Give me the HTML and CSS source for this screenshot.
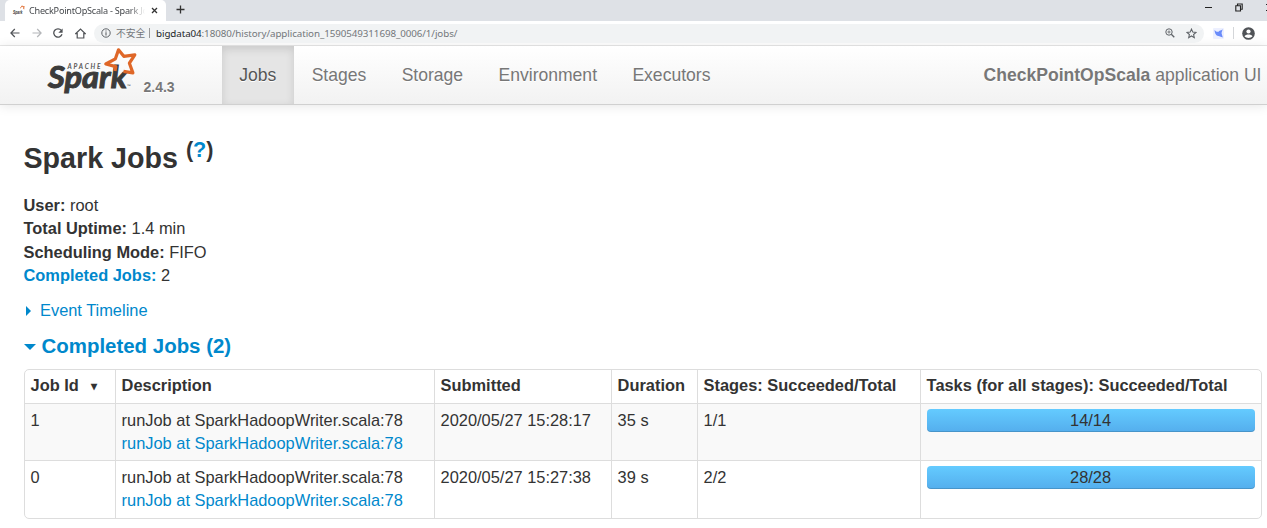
FILE: index.html
```html
<!DOCTYPE html>
<html lang="en">
<head>
<meta charset="utf-8">
<title>CheckPointOpScala - Spark Jobs</title>
<link rel="stylesheet" href="styles.css">
</head>
<body>
<div class="tabstrip">
  <div class="tab">
    <svg class="favicon" width="12" height="12" viewBox="0 0 12 12"><text class="fav-text" x="0" y="8.5" textLength="9.5" lengthAdjust="spacingAndGlyphs">Spark</text><path d="M7.2 3 L8.5 2 L9.2 .8 L9.9 1.8 L11.3 1.7 L10.6 2.9 L11 4.2" fill="none" stroke="#e0692b" stroke-width="1"/></svg>
    <span class="tab-title">CheckPointOpScala - Spark Jobs</span>
    <svg class="tab-close" width="7" height="7" viewBox="0 0 7 7"><path d="M1 1 L6 6 M6 1 L1 6" stroke="#333" stroke-width="1.3"/></svg>
  </div>
  <svg class="newtab" width="9" height="9" viewBox="0 0 9 9"><path d="M4.5 .5 V8.5 M.5 4.5 H8.5" stroke="#333" stroke-width="1.3"/></svg>
  <div class="window-controls">
    <svg width="7" height="9" viewBox="0 0 7 9"><path d="M0 4.5 H7" stroke="#222"/></svg>
    <svg width="8" height="9" viewBox="0 0 8 9"><path d="M.8 2.7 H5.5 V8 H.8Z M2.5 2.5 V1 H7.2 V6.3 H5.5" fill="none" stroke="#222" stroke-width="1.1"/></svg>
    <svg width="7" height="9" viewBox="0 0 7 9"><path d="M0 1 L7 8 M7 1 L0 8" stroke="#222"/></svg>
  </div>
</div>
<div class="toolbar">
  <div class="nav-buttons">
    <svg width="10" height="10" viewBox="0 0 10 10"><path d="M9.5 5 H1 M4.8 1 L.9 5 L4.8 9" fill="none" stroke="#505357" stroke-width="1.2"/></svg>
    <svg width="10" height="10" viewBox="0 0 10 10"><path d="M.5 5 H9 M5.2 1 L9.1 5 L5.2 9" fill="none" stroke="#b4b6b9" stroke-width="1.2"/></svg>
    <svg width="10" height="10" viewBox="0 0 10 10"><path d="M8.3 2.4 A4.2 4.2 0 1 0 9 6.2" fill="none" stroke="#505357" stroke-width="1.3"/><path d="M9.6 .4 V4.7 H5.3Z" fill="#505357"/></svg>
    <svg width="11" height="11" viewBox="0 0 11 11"><path d="M.6 5.7 L5.5 1 L10.4 5.7 H8.8 V10 H2.2 V5.7Z" fill="none" stroke="#505357" stroke-width="1.2"/></svg>
  </div>
  <div class="omnibox">
    <svg width="10" height="10" viewBox="0 0 10 10"><circle cx="5" cy="5" r="4.2" fill="none" stroke="#5f6368"/><path d="M5 4.3 V7.5 M5 2.4 V3.5" stroke="#5f6368" stroke-width="1.1"/></svg>
    <span class="insecure">不安全</span>
    <span class="separator"></span>
    <span class="url"><b>bigdata04</b>:18080/history/application_1590549311698_0006/1/jobs/</span>
    <svg class="magnify" width="10" height="10" viewBox="0 0 10 10"><circle cx="4" cy="4" r="3.2" fill="none" stroke="#5f6368"/><path d="M6.3 6.3 L9.3 9.3" stroke="#5f6368" stroke-width="1.3"/><path d="M4 2.4 V5.6 M2.4 4 H5.6" stroke="#5f6368" stroke-width=".8"/></svg>
    <svg class="bookmark" width="11" height="11" viewBox="0 0 11 11"><path d="M5.5 1.1 L6.8 4.1 L10 4.4 L7.6 6.5 L8.3 9.7 L5.5 8 L2.7 9.7 L3.4 6.5 L1 4.4 L4.2 4.1Z" fill="none" stroke="#5f6368" stroke-width="1.1"/></svg>
  </div>
  <svg class="extension" width="11" height="11" viewBox="0 0 11 11"><rect width="11" height="11" rx="1" fill="#edf0ff"/><path d="M1.5 2 C3 3.8 4.5 4 5.5 3.7 C6.5 2.2 7.5 3 9.7 1.2 L8.5 5 L9.8 9.5 L5.6 7.9 C3.6 8.3 1.8 5.8 1.5 2Z" fill="#6a8cfb"/></svg>
  <span class="toolbar-divider"></span>
  <svg class="profile" width="13" height="13" viewBox="0 0 13 13"><circle cx="6.5" cy="6.5" r="6.3" fill="#505357"/><circle cx="6.5" cy="4.5" r="2.1" fill="#fff"/><path d="M2.5 9.2 C3.6 7 9.4 7 10.5 9.2 C8.7 11.5 4.3 11.5 2.5 9.2Z" fill="#fff"/></svg>
</div>
<nav class="navbar">
  <div class="brand">
    <svg width="90" height="52" viewBox="0 0 90 52">
      <text class="logo-apache" x="20.5" y="23.5" textLength="33">APACHE</text>
      <text class="logo-spark" x="1" y="42.5" textLength="79" lengthAdjust="spacingAndGlyphs">Spark</text>
      <path d="M68 26 L68.8 21.6 L58.8 19 L68.4 13.8 L71.5 4.8 L76.8 11.3 L87.8 9.8 L82.4 18.2 L85.9 27.9 L76.5 26.4" fill="none" stroke="#df6728" stroke-width="3.2" stroke-linejoin="round"/>
      <text class="logo-tm" x="80" y="43">™</text>
    </svg>
    <span class="version">2.4.3</span>
  </div>
  <a class="nav-item active">Jobs</a>
  <a class="nav-item">Stages</a>
  <a class="nav-item">Storage</a>
  <a class="nav-item">Environment</a>
  <a class="nav-item">Executors</a>
  <p class="app-name"><strong>CheckPointOpScala</strong> application UI</p>
</nav>
<main class="content">
  <h3 class="page-title">Spark Jobs <sup class="help">(<a>?</a>)</sup></h3>
  <ul class="summary">
    <li><strong>User:</strong> root</li>
    <li><strong>Total Uptime:</strong> 1.4 min</li>
    <li><strong>Scheduling Mode:</strong> FIFO</li>
    <li><a><strong>Completed Jobs:</strong></a> 2</li>
  </ul>
  <a class="timeline"><span class="arrow-right"></span>Event Timeline</a>
  <h4 class="section-title"><span class="arrow-down"></span>Completed Jobs (2)</h4>
  <table class="jobs">
    <colgroup><col class="c-id"><col class="c-desc"><col class="c-sub"><col class="c-dur"><col class="c-stage"><col class="c-task"></colgroup>
    <thead><tr><th>Job Id <span class="sort">▾</span></th><th>Description</th><th>Submitted</th><th>Duration</th><th>Stages: Succeeded/Total</th><th>Tasks (for all stages): Succeeded/Total</th></tr></thead>
    <tbody>
      <tr><td>1</td><td>runJob at SparkHadoopWriter.scala:78<br><a>runJob at SparkHadoopWriter.scala:78</a></td><td>2020/05/27 15:28:17</td><td>35 s</td><td>1/1</td><td><div class="progress">14/14</div></td></tr>
      <tr><td>0</td><td>runJob at SparkHadoopWriter.scala:78<br><a>runJob at SparkHadoopWriter.scala:78</a></td><td>2020/05/27 15:27:38</td><td>39 s</td><td>2/2</td><td><div class="progress">28/28</div></td></tr>
    </tbody>
  </table>
</main>
</body>
</html>
```
FILE: styles.css
```css
* { box-sizing: border-box; }
body { margin: 0; height: 528px; overflow: hidden; background: #fff; color: #333; font: 16.4px/23.4px "Liberation Sans", Arial, sans-serif; }
svg { display: block; flex: none; }
a { color: #0088cc; }

.tabstrip { display: flex; height: 21px; background: #dee1e6; padding-left: 5px; overflow: hidden; }
.tab { display: flex; align-items: center; width: 161px; height: 21px; padding: 0 8px; background: #fff; border-radius: 5px 5px 0 0; }
.favicon { overflow: visible; }
.fav-text { font: bold italic 6px "Liberation Sans", sans-serif; fill: #333; }
.tab-title { width: 117px; margin-left: 4px; overflow: hidden; white-space: nowrap; font: 9.1px/19px "Noto Sans", sans-serif; letter-spacing: -.22px; color: #45484c; -webkit-mask-image: linear-gradient(to right, #000 87%, transparent); mask-image: linear-gradient(to right, #000 87%, transparent); }
.tab-close { margin-left: 6px; margin-top: -1px; }
.newtab { margin: 5px 0 0 10px; }
.window-controls { display: flex; gap: 23px; margin: 3px -6px 0 auto; }

.toolbar { display: flex; align-items: center; height: 25px; background: #fff; border-bottom: 1px solid #e8e8e8; }
.nav-buttons { display: flex; flex: none; align-items: center; gap: 11.5px; width: 94px; padding-left: 10px; }
.omnibox { display: flex; flex: none; align-items: center; width: 1110px; height: 19px; padding: 0 7px; border-radius: 10px; background: #f1f3f4; font: 9.8px/19px "Noto Sans", "Noto Sans CJK SC", sans-serif; color: #73777b; white-space: nowrap; }
.insecure { width: 30px; margin-left: 5px; }
.separator { width: 1px; height: 10px; margin: 0 6px 0 3px; background: #999; }
.url { letter-spacing: -.085px; }
.url b { font-weight: normal; color: #222529; }
.magnify { margin-left: auto; }
.bookmark { margin-left: 11px; }
.extension { margin-left: 9px; }
.toolbar-divider { width: 1px; height: 12px; margin: 0 8px 0 9px; background: #d4d6d9; }

.navbar { display: flex; height: 59px; background: linear-gradient(#fff, #f2f2f2); border-bottom: 1px solid #d0d0d0; box-shadow: 0 1px 11px rgba(0,0,0,.1); font-size: 17.56px; line-height: 59px; color: #777; text-shadow: 0 1px 0 #fff; }
.brand { display: flex; width: 221.5px; padding-left: 47px; }
.brand svg { margin-top: -1px; text-shadow: none; }
.logo-apache { font: italic bold 6.5px Lato, sans-serif; fill: #555; }
.logo-spark { font: italic bold 31px Lato, sans-serif; fill: #3b3b3b; stroke: #3b3b3b; stroke-width: 1px; }
.logo-tm { font: 5px Lato, sans-serif; fill: #555; }
.version { margin: 11px 0 0 6.5px; font-size: 14px; font-weight: bold; line-height: 60px; height: 47px; }
.nav-item { padding: 0 17.7px; color: #777; }
.nav-item.active { color: #555; background: #e5e5e5; box-shadow: inset 0 3px 8px rgba(0,0,0,.125); }
.app-name { margin: 0 5.5px 0 auto; }

.content { padding: 0 6px 0 23.5px; }
.page-title { margin: 30px 0 0; font-size: 28.65px; line-height: 47px; height: 58.9px; }
.help { position: relative; top: -.5em; vertical-align: baseline; font-size: 21.6px; line-height: 0; }
.summary { list-style: none; margin: 0; padding: 0; }
.timeline { display: flex; align-items: center; margin-top: 11.4px; }
.arrow-right { margin: 0 9px 0 2.5px; border: solid transparent; border-width: 5.5px 0 5.5px 5px; border-left-color: #0088cc; }
.section-title { display: flex; align-items: center; margin: 11.4px 0 0; font-size: 20.45px; line-height: 23.4px; color: #0088cc; }
.arrow-down { margin: 3px 6px 0 0; border: solid transparent; border-width: 6px 6px 0; border-top-color: #0088cc; }

.jobs { width: 1238px; margin-top: 11.9px; table-layout: fixed; border: 1px solid #ddd; border-radius: 5px; border-collapse: separate; border-spacing: 0; }
.c-id { width: 90px; } .c-desc { width: 319px; } .c-sub { width: 177px; } .c-dur { width: 86px; } .c-stage { width: 223px; }
.jobs th, .jobs td { padding: 4.6px 6px 4.6px 6.1px; text-align: left; vertical-align: top; white-space: nowrap; border-left: 1px solid #ddd; }
.jobs th { height: 33px; padding-top: 4px; }
.jobs td { height: 57.3px; border-top: 1px solid #ddd; }
.jobs th:first-child, .jobs td:first-child { border-left: 0; }
.jobs tbody tr:first-child td { background: #f9f9f9; }
.sort { display: inline-block; margin-left: 8px; font-size: 11.5px; line-height: 1; vertical-align: 1px; }
.progress { height: 23.4px; border-radius: 4px; background: linear-gradient(#64cbff, #54aeed); box-shadow: inset 0 -1px 0 rgba(0,0,0,.15); text-align: center; }
```
